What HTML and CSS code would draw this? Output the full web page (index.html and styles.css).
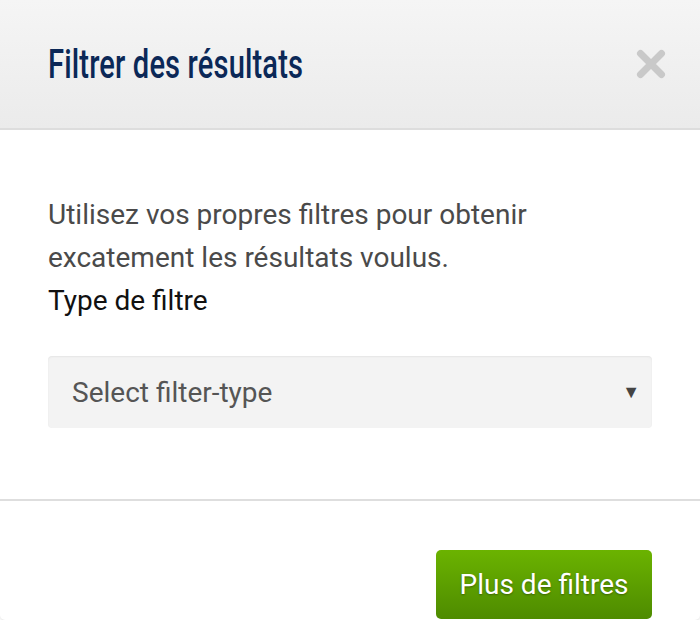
FILE: index.html
```html
<!DOCTYPE html>
<html lang="fr">
<head>
<meta charset="utf-8">
<title>Filtrer des résultats</title>
<link rel="stylesheet" href="styles.css">
</head>
<body>
<div class="modal">
  <div class="modal-header">
    <h1 class="modal-title">Filtrer des résultats</h1>
    <button class="close" aria-label="Fermer">
      <svg width="30" height="30" viewBox="0 0 30 30"><path d="M4.5 4.5 L25.5 25.5 M25.5 4.5 L4.5 25.5" stroke="#c9c9c9" stroke-width="7" stroke-linecap="round"/></svg>
    </button>
  </div>
  <div class="modal-body">
    <p class="intro">Utilisez vos propres filtres pour obtenir excatement les résultats voulus.</p>
    <label class="label">Type de filtre</label>
    <div class="select">
      <span class="select-text">Select filter-type</span>
      <span class="select-arrow">▼</span>
    </div>
  </div>
  <div class="modal-footer">
    <button class="btn-green">Plus de filtres</button>
  </div>
</div>
</body>
</html>
```
FILE: styles.css
```css
html, body {
  margin: 0;
  padding: 0;
  background: #ffffff;
}
body {
  font-family: Roboto, "Liberation Sans", sans-serif;
}
.modal {
  width: 700px;
  height: 620px;
  background: #fff;
  border-radius: 0 0 5px 5px;
  box-shadow: 0 1px 3px rgba(0,0,0,0.12);
  display: flex;
  flex-direction: column;
}
.modal-header {
  box-sizing: border-box;
  height: 130px;
  background: linear-gradient(#f5f5f5, #ebebeb);
  border-bottom: 2px solid #dddddd;
  display: flex;
  align-items: center;
  justify-content: space-between;
  padding: 0 34px 0 48px;
}
.modal-title {
  margin: 0;
  font-family: Roboto, sans-serif;
  font-weight: 500;
  font-size: 41px;
  letter-spacing: 0.2px;
  color: #0b2857;
  padding-bottom: 1px;
  transform: scaleX(0.71);
  transform-origin: left center;
  white-space: nowrap;
}
.close {
  border: 0;
  background: none;
  padding: 0;
  width: 30px;
  height: 30px;
  display: flex;
}
.modal-body {
  padding: 63px 48px 71px;
  border-bottom: 2px solid #dedede;
}
.intro {
  margin: 0;
  font-size: 28px;
  line-height: 43px;
  color: #4a4a4a;
}
.label {
  display: block;
  font-size: 28px;
  font-weight: 400;
  line-height: 43px;
  color: #111;
}
.select {
  margin-top: 34px;
  height: 72px;
  background: #f3f3f3;
  border-radius: 4px;
  box-shadow: inset 0 1px 2px rgba(0,0,0,0.06);
  display: flex;
  align-items: center;
  justify-content: space-between;
  padding: 0 12px 0 24px;
}
.select-text {
  font-size: 28px;
  color: #555;
}
.select-arrow {
  font-size: 18px;
  color: #444;
}
.modal-footer {
  flex: 1;
  display: flex;
  justify-content: flex-end;
  align-items: flex-end;
  padding: 0 48px 1px;
}
.btn-green {
  width: 216px;
  height: 69px;
  border: 0;
  border-radius: 5px;
  background: linear-gradient(#6bb300, #4e8b00);
  color: #fff;
  font-family: Roboto, sans-serif;
  font-size: 28px;
  text-shadow: 0 1px 2px rgba(0,0,0,0.35);
}
```
